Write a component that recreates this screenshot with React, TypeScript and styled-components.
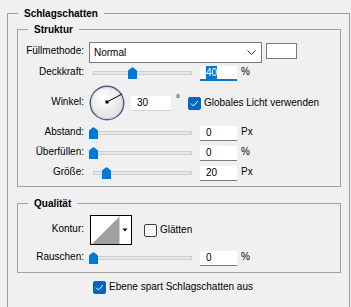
import React from "react"
import styled, { createGlobalStyle } from "styled-components"

const GlobalStyle = createGlobalStyle`
  html, body {
    margin: 0;
    padding: 0;
    overflow: hidden;
    background: #f0f0f0;
  }
  body {
    font-family: "Liberation Sans", Arial, sans-serif;
    font-size: 10px;
    color: #000;
  }
`

const Panel = styled.div`
  width: 351px;
  height: 307px;
  overflow: hidden;
  padding-top: 7px;
  box-sizing: border-box;
`

const Group = styled.fieldset<{ $outer?: boolean; $top?: number }>`
  margin: ${(p) => (p.$outer ? "0 0 0 7px" : `${p.$top || 0}px 0 0 0`)};
  width: ${(p) => (p.$outer ? "343px" : "324px")};
  box-sizing: border-box;
  padding: 0;
  min-width: 0;
  border: 1px solid #a0a0a0;
`

const Legend = styled.legend`
  margin-left: 10px;
  padding: 0 6px;
  font-weight: bold;
  line-height: 13px;
`

const OuterBody = styled.div`
  padding: 3px 0 20px 9px;
`

const Rows = styled.div<{ $pad: string }>`
  display: flex;
  flex-direction: column;
  padding: ${(p) => p.$pad};
`

const Row = styled.div<{ $h: number; $mt?: number }>`
  display: grid;
  grid-template-columns: 66px auto;
  column-gap: 5px;
  align-items: center;
  height: ${(p) => p.$h}px;
  margin-top: ${(p) => p.$mt || 0}px;
`

const Label = styled.div`
  text-align: right;
  line-height: 12px;
  padding-bottom: 3px;
  white-space: nowrap;
`

const Controls = styled.div`
  display: flex;
  align-items: center;
`

const Select = styled.div`
  width: 173px;
  height: 21px;
  box-sizing: border-box;
  border: 1px solid #7a7a7a;
  background: #fff;
  display: flex;
  align-items: center;
  justify-content: space-between;
  padding: 0 5px 0 4px;
  font-size: 10px;
`

const Swatch = styled.div`
  width: 31px;
  height: 16px;
  margin-left: 4px;
  margin-top: -3px;
  box-sizing: border-box;
  border: 1px solid #7a7a7a;
  background: #fff;
`

const SliderBox = styled.div`
  position: relative;
  width: 107px;
  height: 20px;
  flex: none;
`

const Track = styled.div`
  position: absolute;
  left: 4px;
  right: 4px;
  top: 8px;
  height: 4px;
  box-sizing: border-box;
  background: #e7e7e7;
  border: 1px solid #cdcdcd;
`

const Thumb = styled.svg`
  position: absolute;
  top: 4px;
  width: 9px;
  height: 12px;
`

const Field = styled.div<{ $w?: number; $focus?: boolean; $soft?: boolean }>`
  width: ${(p) => p.$w || 37}px;
  height: 15px;
  box-sizing: border-box;
  margin-left: ${(p) => (p.$w ? 6 : 4)}px;
  background: #fff;
  border-bottom: ${(p) =>
    p.$focus ? "2px solid #0078d7" : p.$soft ? "1px solid #d4d4d4" : "1px solid #7a7a7a"};
  padding-left: 6px;
  line-height: 14px;
  font-size: 10px;
`

const Selected = styled.span`
  background: #0078d7;
  color: #fff;
  padding: 1px 0;
`

const Unit = styled.span<{ $ml?: number; $raise?: number }>`
  margin-left: ${(p) => p.$ml ?? 4}px;
  line-height: 12px;
  padding-bottom: ${(p) => p.$raise ?? 3}px;
`

const CheckLabel = styled.label<{ $ml?: number }>`
  display: flex;
  align-items: center;
  gap: 3px;
  margin-left: ${(p) => p.$ml || 0}px;
  line-height: 12px;
  white-space: nowrap;
`

const Box = styled.span<{ $checked?: boolean }>`
  width: 13px;
  height: 13px;
  box-sizing: border-box;
  border-radius: 2px;
  background: ${(p) => (p.$checked ? "#0067c0" : "#f7f7f7")};
  border: 1px solid ${(p) => (p.$checked ? "#0067c0" : "#3c3c3c")};
  display: inline-flex;
  align-items: center;
  justify-content: center;
  flex: none;
`

const FooterRow = styled.div`
  display: flex;
  align-items: center;
  height: 20px;
  margin-top: 4px;
  padding-left: 76px;
`

const Check = ({ checked, text, ml }: { checked?: boolean; text: string; ml?: number }) => (
  <CheckLabel $ml={ml}>
    <Box $checked={checked}>
      {checked && (
        <svg width="9" height="7" viewBox="0 0 9 7">
          <path d="M1 3.6 L3.4 6 L8 1" fill="none" stroke="#fff" strokeWidth="1" />
        </svg>
      )}
    </Box>
    {text}
  </CheckLabel>
)

const Slider = ({ value }: { value: number }) => (
  <SliderBox>
    <Track />
    <Thumb viewBox="0 0 9 12" style={{ left: 4 + value * 99 - 4.5 }}>
      <path d="M0 4.2 Q0 3.6 0.6 3.1 L3.8 0.4 Q4.5 -0.1 5.2 0.4 L8.4 3.1 Q9 3.6 9 4.2 V12 H0 Z" fill="#0078d7" />
    </Thumb>
  </SliderBox>
)

const NumRow = ({ label, value, unit, pos }: { label: string; value: string; unit: string; pos: number }) => (
  <Row $h={20}>
    <Label>{label}</Label>
    <Controls>
      <Slider value={pos} />
      <Field>{value}</Field>
      <Unit>{unit}</Unit>
    </Controls>
  </Row>
)

const Dial = () => (
  <svg width="36" height="36" viewBox="0 0 36 36">
    <defs>
      <radialGradient id="dialFill" cx="40%" cy="35%" r="70%">
        <stop offset="0%" stopColor="#ffffff" />
        <stop offset="100%" stopColor="#dedede" />
      </radialGradient>
    </defs>
    <circle cx="18" cy="18" r="16.8" fill="url(#dialFill)" stroke="#4d5c86" strokeWidth="1.4" />
    <circle cx="18" cy="18" r="15.6" fill="none" stroke="#b9c0d4" strokeWidth="0.6" />
    <line x1="18" y1="17" x2="33" y2="9" stroke="#000" strokeWidth="1" />
    <rect x="16.5" y="15.5" width="3" height="3" fill="#000" />
  </svg>
)

const Contour = () => (
  <svg width="42" height="30" viewBox="0 0 42 30" style={{ marginLeft: 1, flex: "none" }}>
    <rect x="0.5" y="0.5" width="41" height="29" fill="#fff" stroke="#000" />
    <polygon points="2,29 29,29 29,2" fill="#a0a0a0" />
    <line x1="29.5" y1="1" x2="29.5" y2="29" stroke="#d0d0d0" />
    <polygon points="32.5,13.5 37.5,13.5 35,16.5" fill="#000" />
  </svg>
)

const Chevron = () => (
  <svg width="9" height="5" viewBox="0 0 9 5">
    <path d="M0.5 0.5 L4.5 4.5 L8.5 0.5" fill="none" stroke="#444" strokeWidth="1" />
  </svg>
)

export default function App() {
  return (
    <Panel>
      <GlobalStyle />
      <Group $outer>
        <Legend>Schlagschatten</Legend>
        <OuterBody>
          <Group>
            <Legend>Struktur</Legend>
            <Rows $pad="6px 0 3px">
              <Row $h={21}>
                <Label>Füllmethode:</Label>
                <Controls>
                  <Select>
                    Normal
                    <Chevron />
                  </Select>
                  <Swatch />
                </Controls>
              </Row>
              <Row $h={20}>
                <Label>Deckkraft:</Label>
                <Controls>
                  <Slider value={0.4} />
                  <Field $focus>
                    <Selected>40</Selected>
                  </Field>
                  <Unit>%</Unit>
                </Controls>
              </Row>
              <Row $h={40}>
                <Label>Winkel:</Label>
                <Controls>
                  <Dial />
                  <Field $w={40} $soft>
                    30
                  </Field>
                  <Unit $ml={5} $raise={8}>
                    °
                  </Unit>
                  <Check checked text="Globales Licht verwenden" ml={8} />
                </Controls>
              </Row>
              <NumRow label="Abstand:" value="0" unit="Px" pos={0} />
              <NumRow label="Überfüllen:" value="0" unit="%" pos={0} />
              <NumRow label="Größe:" value="20" unit="Px" pos={0.14} />
            </Rows>
          </Group>
          <Group $top={10}>
            <Legend>Qualität</Legend>
            <Rows $pad="5px 0 4px">
              <Row $h={30}>
                <Label>Kontur:</Label>
                <Controls>
                  <Contour />
                  <Check text="Glätten" ml={12} />
                </Controls>
              </Row>
              <Row $h={20} $mt={3}>
                <Label>Rauschen:</Label>
                <Controls>
                  <Slider value={0} />
                  <Field>0</Field>
                  <Unit>%</Unit>
                </Controls>
              </Row>
            </Rows>
          </Group>
          <FooterRow>
            <Check checked text="Ebene spart Schlagschatten aus" />
          </FooterRow>
        </OuterBody>
      </Group>
    </Panel>
  )
}
